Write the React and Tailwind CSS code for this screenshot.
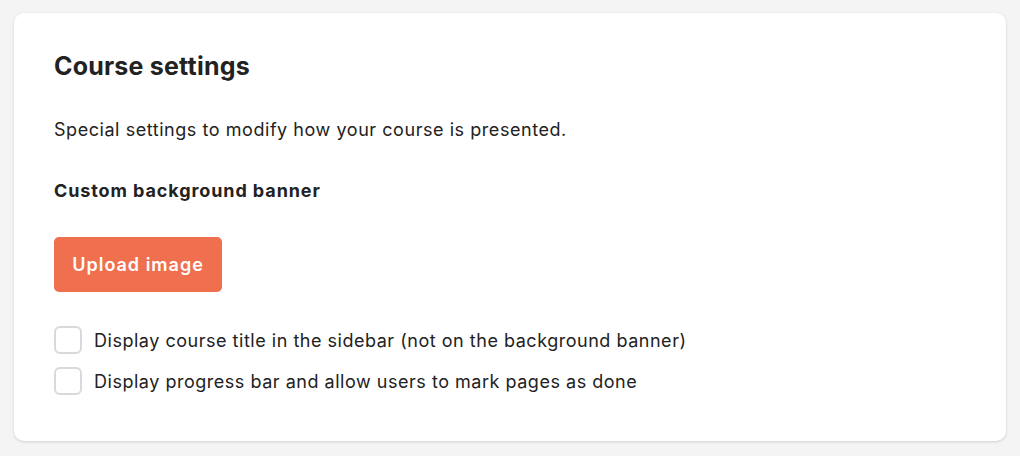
export default function App() {
  return (
    <div className="min-h-[456px] w-[1020px] bg-[#f4f4f4] pt-[13px] pl-[14px] pr-[14px]" style={{ fontFamily: 'Inter, "Noto Sans", sans-serif' }}>
      <div className="h-[428px] rounded-[10px] bg-white shadow-[0_1px_3px_rgba(0,0,0,0.15)] pl-[40px] pt-[38px] text-[#222]">
        <h1 className="text-[25px] font-bold leading-[30px] tracking-[0.2px]">Course settings</h1>
        <p className="mt-[37px] text-[18px] leading-[24px] tracking-[0.55px]">Special settings to modify how your course is presented.</p>
        <h2 className="mt-[37px] text-[18px] font-bold leading-[24px] tracking-[0.9px]">Custom background banner</h2>
        <button className="mt-[34px] block h-[55px] w-[168px] rounded-[5px] bg-[#ef6f4f] text-[18px] font-semibold tracking-[1px] text-white">Upload image</button>
        <div className="mt-[34px] flex flex-col gap-[13px]">
          <label className="flex h-[28px] items-center gap-[12px] text-[18px] tracking-[0.52px]">
            <span className="h-[28px] w-[28px] shrink-0 rounded-[6px] border-2 border-[#d9d9d9] bg-white"></span>
            Display course title in the sidebar (not on the background banner)
          </label>
          <label className="flex h-[28px] items-center gap-[12px] text-[18px] tracking-[0.52px]">
            <span className="h-[28px] w-[28px] shrink-0 rounded-[6px] border-2 border-[#d9d9d9] bg-white"></span>
            Display progress bar and allow users to mark pages as done
          </label>
        </div>
      </div>
    </div>
  );
}
